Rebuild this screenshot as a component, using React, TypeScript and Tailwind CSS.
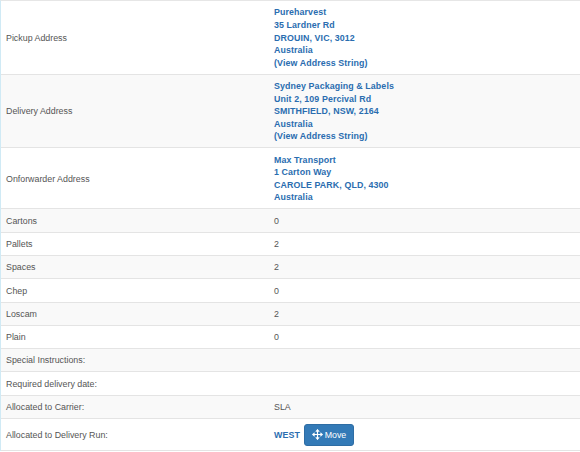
import React from "react";
import { Move } from "lucide-react";

type Row = {
  label: string;
  value?: string;
  lines?: string[];
  run?: boolean;
};

const ROWS: Row[] = [
  {
    label: "Pickup Address",
    lines: ["Pureharvest", "35 Lardner Rd", "DROUIN, VIC, 3012", "Australia", "(View Address String)"],
  },
  {
    label: "Delivery Address",
    lines: ["Sydney Packaging & Labels", "Unit 2, 109 Percival Rd", "SMITHFIELD, NSW, 2164", "Australia", "(View Address String)"],
  },
  {
    label: "Onforwarder Address",
    lines: ["Max Transport", "1 Carton Way", "CAROLE PARK, QLD, 4300", "Australia"],
  },
  { label: "Cartons", value: "0" },
  { label: "Pallets", value: "2" },
  { label: "Spaces", value: "2" },
  { label: "Chep", value: "0" },
  { label: "Loscam", value: "2" },
  { label: "Plain", value: "0" },
  { label: "Special Instructions:" },
  { label: "Required delivery date:" },
  { label: "Allocated to Carrier:", value: "SLA" },
  { label: "Allocated to Delivery Run:", run: true },
];

const App: React.FC = () => {
  return (
    <div className="h-[452px] w-[580px] overflow-hidden bg-white font-['Liberation_Sans',sans-serif] text-[8.85px] leading-[12.6px] text-[#555]">
      <div className="border-t border-[#e6e6e6] border-l border-l-[#d0eaf5]">
        {ROWS.map((row, i) => (
          <div
            key={row.label}
            className={`flex items-center border-b border-[#e4e4e4] pt-[5.4px] pb-[4.3px] ${
              i % 2 === 1 ? "bg-[#f9f9f9]" : "bg-white"
            } ${row.run ? "h-[32px]" : ""}`}
          >
            <div className="w-[273px] shrink-0 pl-[5px]">{row.label}</div>
            <div className="flex-1">
              {row.lines && (
                <div className="font-bold tracking-[0.1px] text-[#2a6db0]">
                  {row.lines.map((line) => (
                    <div key={line}>{line}</div>
                  ))}
                </div>
              )}
              {row.value && <div className="min-h-[12.6px]">{row.value}</div>}
              {!row.lines && !row.value && !row.run && <div className="h-[12.6px]" />}
              {row.run && (
                <div className="flex items-center gap-[4px]">
                  <span className="font-bold tracking-[0.1px] text-[#2a6db0]">WEST</span>
                  <button className="flex h-[22px] w-[50px] items-center justify-center gap-[2px] rounded-[3px] border border-[#2e6da4] bg-[#337ab7] text-white">
                    <Move size={11} strokeWidth={2.5} />
                    Move
                  </button>
                </div>
              )}
            </div>
          </div>
        ))}
      </div>
    </div>
  );
};

export default App;
